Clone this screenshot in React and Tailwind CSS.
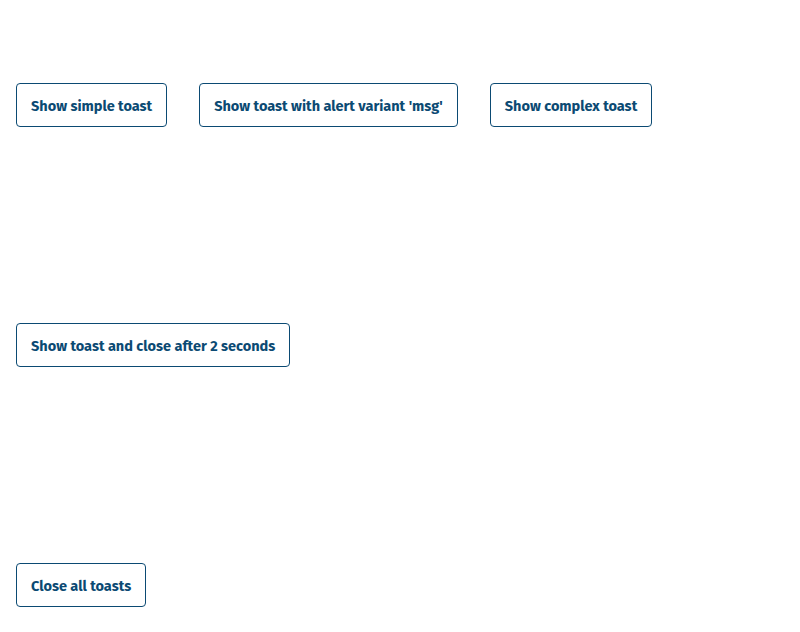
import React from "react";

function Btn({ children }) {
  return (
    <button
      type="button"
      className="h-[44px] px-[14px] pt-[2px] border border-[#0b4a73] rounded-[4px] bg-white text-[#0b4a73] text-[14.5px] font-bold leading-none whitespace-nowrap"
      style={{ fontFamily: '"Fira Sans", Lato, "Open Sans", sans-serif' }}
    >
      {children}
    </button>
  );
}

export default function App() {
  return (
    <div className="w-[800px] h-[632px] bg-white px-4 pt-[83px] flex flex-col gap-[196px]">
      <div className="flex gap-8">
        <Btn>Show simple toast</Btn>
        <Btn>Show toast with alert variant 'msg'</Btn>
        <Btn>Show complex toast</Btn>
      </div>
      <div className="flex">
        <Btn>Show toast and close after 2 seconds</Btn>
      </div>
      <div className="flex">
        <Btn>Close all toasts</Btn>
      </div>
    </div>
  );
}
